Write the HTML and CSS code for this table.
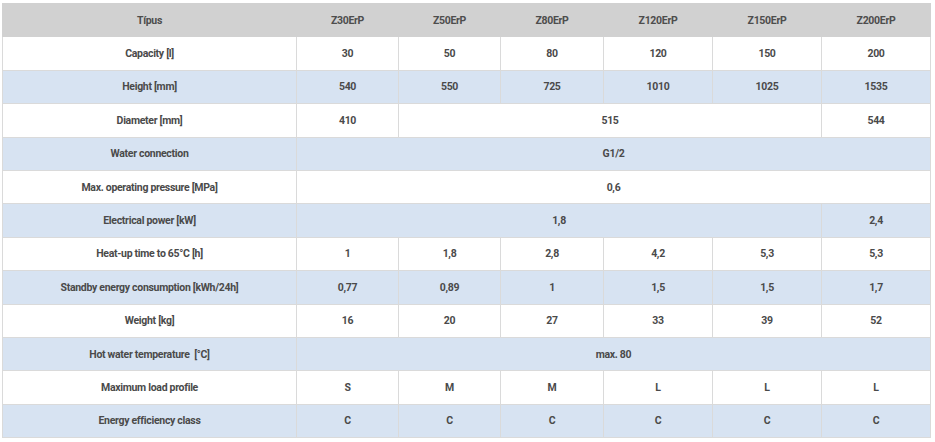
FILE: index.html
```html
<!DOCTYPE html>
<html lang="hu">
<head>
<meta charset="utf-8">
<title>Z ErP</title>
<link rel="stylesheet" href="styles.css">
</head>
<body>
<table class="spec">
  <colgroup>
    <col class="c-label">
    <col class="c-a">
    <col class="c-b">
    <col class="c-c">
    <col class="c-d">
    <col class="c-e">
    <col class="c-f">
  </colgroup>
  <thead>
    <tr class="head">
      <th>Típus</th><th>Z30ErP</th><th>Z50ErP</th><th>Z80ErP</th><th>Z120ErP</th><th>Z150ErP</th><th>Z200ErP</th>
    </tr>
  </thead>
  <tbody>
    <tr><td>Capacity [l]</td><td>30</td><td>50</td><td>80</td><td>120</td><td>150</td><td>200</td></tr>
    <tr class="alt"><td>Height [mm]</td><td>540</td><td>550</td><td>725</td><td>1010</td><td>1025</td><td>1535</td></tr>
    <tr><td>Diameter [mm]</td><td>410</td><td colspan="4">515</td><td>544</td></tr>
    <tr class="alt"><td>Water connection</td><td colspan="6">G1/2</td></tr>
    <tr><td>Max. operating pressure [MPa]</td><td colspan="6">0,6</td></tr>
    <tr class="alt"><td>Electrical power [kW]</td><td colspan="5">1,8</td><td>2,4</td></tr>
    <tr><td>Heat-up time to 65°C [h]</td><td>1</td><td>1,8</td><td>2,8</td><td>4,2</td><td>5,3</td><td>5,3</td></tr>
    <tr class="alt"><td>Standby energy consumption [kWh/24h]</td><td>0,77</td><td>0,89</td><td>1</td><td>1,5</td><td>1,5</td><td>1,7</td></tr>
    <tr><td>Weight [kg]</td><td>16</td><td>20</td><td>27</td><td>33</td><td>39</td><td>52</td></tr>
    <tr class="alt"><td>Hot water temperature &nbsp;[°C]</td><td colspan="6">max. 80</td></tr>
    <tr><td>Maximum load profile</td><td>S</td><td>M</td><td>M</td><td>L</td><td>L</td><td>L</td></tr>
    <tr class="alt"><td>Energy efficiency class</td><td>C</td><td>C</td><td>C</td><td>C</td><td>C</td><td>C</td></tr>
  </tbody>
</table>
</body>
</html>
```
FILE: styles.css
```css
html, body {
  margin: 0;
  padding: 0;
  background: #ffffff;
}
body {
  padding: 3px 0 0 2px;
  font-family: Roboto, "Liberation Sans", Arial, sans-serif;
}
.spec {
  border-collapse: collapse;
  table-layout: fixed;
  width: 928px;
  border: 1px solid #d9d9d9;
}
.c-label { width: 294px; }
.c-a { width: 102px; }
.c-b { width: 102px; }
.c-c { width: 103px; }
.c-d { width: 109px; }
.c-e { width: 109px; }
.c-f { width: 109px; }
.spec th,
.spec td {
  height: 33.4px;
  padding: 0 4px;
  box-sizing: border-box;
  text-align: center;
  vertical-align: middle;
  font-size: 10.5px;
  letter-spacing: -0.3px;
  font-weight: 700;
  color: #4a4a4a;
  border: 1px solid #dadada;
  white-space: nowrap;
}
.head th {
  background: #d1d1d1;
  border-color: #d1d1d1;
  color: #4d4d4d;
}
.spec tr.alt td {
  background: #d7e3f2;
}
```
